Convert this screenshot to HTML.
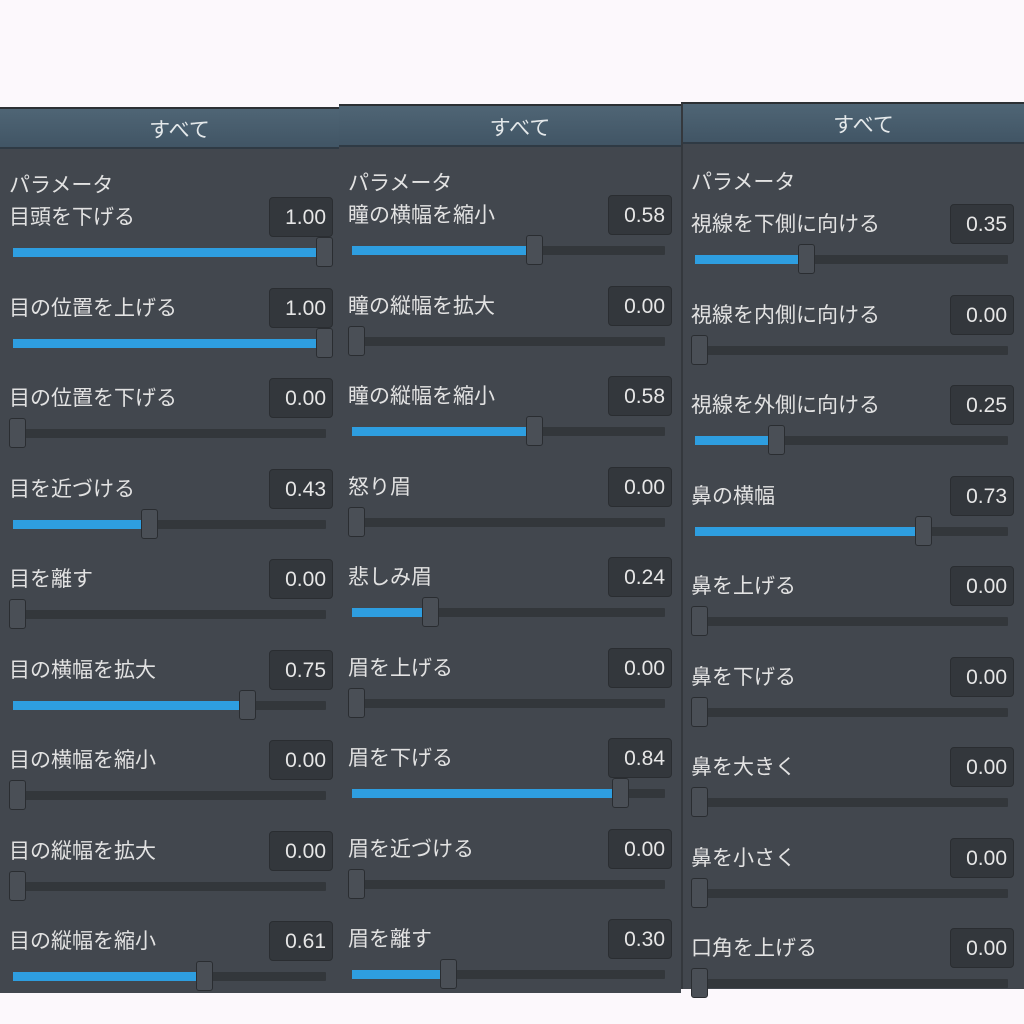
<!DOCTYPE html>
<html><head><meta charset="utf-8"><style>
body{margin:0;width:1024px;height:1024px;background:#fcf8fc;position:relative;overflow:hidden;font-family:"Liberation Sans","Noto Sans CJK JP",sans-serif;}
.p{position:absolute;background:#42474e;border-top:2px solid #2c3034;box-sizing:border-box;}
.h{position:absolute;left:0;right:0;top:0;height:38px;background:linear-gradient(#4f6575,#415565);border-bottom:2px solid #2f3a44;color:#e4e8ea;font-size:21px;text-align:center;line-height:44px;padding-left:20px;}
.t{position:absolute;left:9px;color:#e2e2e2;font-size:21px;}
.r{position:absolute;left:0;right:0;height:60px;}
.l{position:absolute;left:9px;top:1px;line-height:40px;font-size:21px;color:#e2e2e2;white-space:nowrap;}
.v{position:absolute;top:0;width:64px;height:40px;box-sizing:border-box;background:#33373c;border:1px solid #2a2d31;border-radius:4px;color:#e6e6e6;font-size:21px;text-align:right;padding-right:6px;line-height:40px;}
.k{position:absolute;left:13px;top:51px;width:313px;height:9px;background:#33373b;border-radius:1px;}
.f{position:absolute;left:0;top:0;height:9px;background:#2e9ee0;width:calc(var(--v)*307px + 4px);}
.m{position:absolute;top:-11px;left:calc(var(--v)*307px - 4px);width:17px;height:30px;box-sizing:border-box;background:#4a4f56;border:1px solid #2a2d31;border-radius:3px;}
</style></head><body>

<div class="p" style="left:0;top:107px;width:339px;height:886px;">
<div class="h">すべて</div>
<div class="t" style="top:60px;">パラメータ</div>
<div class="r" style="top:88px"><div class="l">目頭を下げる</div><div class="v" style="left:269px">1.00</div><div class="k" style="--v:1"><div class="f"></div><div class="m"></div></div></div>
<div class="r" style="top:178.5px"><div class="l">目の位置を上げる</div><div class="v" style="left:269px">1.00</div><div class="k" style="--v:1"><div class="f"></div><div class="m"></div></div></div>
<div class="r" style="top:269px"><div class="l">目の位置を下げる</div><div class="v" style="left:269px">0.00</div><div class="k" style="--v:0"><div class="m"></div></div></div>
<div class="r" style="top:359.5px"><div class="l">目を近づける</div><div class="v" style="left:269px">0.43</div><div class="k" style="--v:0.43"><div class="f"></div><div class="m"></div></div></div>
<div class="r" style="top:450px"><div class="l">目を離す</div><div class="v" style="left:269px">0.00</div><div class="k" style="--v:0"><div class="m"></div></div></div>
<div class="r" style="top:540.5px"><div class="l">目の横幅を拡大</div><div class="v" style="left:269px">0.75</div><div class="k" style="--v:0.75"><div class="f"></div><div class="m"></div></div></div>
<div class="r" style="top:631px"><div class="l">目の横幅を縮小</div><div class="v" style="left:269px">0.00</div><div class="k" style="--v:0"><div class="m"></div></div></div>
<div class="r" style="top:721.5px"><div class="l">目の縦幅を拡大</div><div class="v" style="left:269px">0.00</div><div class="k" style="--v:0"><div class="m"></div></div></div>
<div class="r" style="top:812px"><div class="l">目の縦幅を縮小</div><div class="v" style="left:269px">0.61</div><div class="k" style="--v:0.61"><div class="f"></div><div class="m"></div></div></div>
</div>

<div class="p" style="left:339px;top:104px;width:342px;height:889px;">
<div class="h" style="height:39px;line-height:45px">すべて</div>
<div class="t" style="top:61px;">パラメータ</div>
<div class="r" style="top:89px"><div class="l">瞳の横幅を縮小</div><div class="v" style="left:269px">0.58</div><div class="k" style="--v:0.58"><div class="f"></div><div class="m"></div></div></div>
<div class="r" style="top:179.5px"><div class="l">瞳の縦幅を拡大</div><div class="v" style="left:269px">0.00</div><div class="k" style="--v:0"><div class="m"></div></div></div>
<div class="r" style="top:270px"><div class="l">瞳の縦幅を縮小</div><div class="v" style="left:269px">0.58</div><div class="k" style="--v:0.58"><div class="f"></div><div class="m"></div></div></div>
<div class="r" style="top:360.5px"><div class="l">怒り眉</div><div class="v" style="left:269px">0.00</div><div class="k" style="--v:0"><div class="m"></div></div></div>
<div class="r" style="top:451px"><div class="l">悲しみ眉</div><div class="v" style="left:269px">0.24</div><div class="k" style="--v:0.24"><div class="f"></div><div class="m"></div></div></div>
<div class="r" style="top:541.5px"><div class="l">眉を上げる</div><div class="v" style="left:269px">0.00</div><div class="k" style="--v:0"><div class="m"></div></div></div>
<div class="r" style="top:632px"><div class="l">眉を下げる</div><div class="v" style="left:269px">0.84</div><div class="k" style="--v:0.86"><div class="f"></div><div class="m"></div></div></div>
<div class="r" style="top:722.5px"><div class="l">眉を近づける</div><div class="v" style="left:269px">0.00</div><div class="k" style="--v:0"><div class="m"></div></div></div>
<div class="r" style="top:813px"><div class="l">眉を離す</div><div class="v" style="left:269px">0.30</div><div class="k" style="--v:0.30"><div class="f"></div><div class="m"></div></div></div>
</div>

<div class="p" style="left:681px;top:102px;width:343px;height:887px;border-left:2px solid #34383d;">
<div class="h" style="height:38px;line-height:44px">すべて</div>
<div class="t" style="top:62px;left:8px">パラメータ</div>
<div class="r" style="top:100px"><div class="l" style="left:8px">視線を下側に向ける</div><div class="v" style="left:267px">0.35</div><div class="k" style="--v:0.35;left:12px"><div class="f"></div><div class="m"></div></div></div>
<div class="r" style="top:190.5px"><div class="l" style="left:8px">視線を内側に向ける</div><div class="v" style="left:267px">0.00</div><div class="k" style="--v:0;left:12px"><div class="m"></div></div></div>
<div class="r" style="top:281px"><div class="l" style="left:8px">視線を外側に向ける</div><div class="v" style="left:267px">0.25</div><div class="k" style="--v:0.25;left:12px"><div class="f"></div><div class="m"></div></div></div>
<div class="r" style="top:371.5px"><div class="l" style="left:8px">鼻の横幅</div><div class="v" style="left:267px">0.73</div><div class="k" style="--v:0.73;left:12px"><div class="f"></div><div class="m"></div></div></div>
<div class="r" style="top:462px"><div class="l" style="left:8px">鼻を上げる</div><div class="v" style="left:267px">0.00</div><div class="k" style="--v:0;left:12px"><div class="m"></div></div></div>
<div class="r" style="top:552.5px"><div class="l" style="left:8px">鼻を下げる</div><div class="v" style="left:267px">0.00</div><div class="k" style="--v:0;left:12px"><div class="m"></div></div></div>
<div class="r" style="top:643px"><div class="l" style="left:8px">鼻を大きく</div><div class="v" style="left:267px">0.00</div><div class="k" style="--v:0;left:12px"><div class="m"></div></div></div>
<div class="r" style="top:733.5px"><div class="l" style="left:8px">鼻を小さく</div><div class="v" style="left:267px">0.00</div><div class="k" style="--v:0;left:12px"><div class="m"></div></div></div>
<div class="r" style="top:824px"><div class="l" style="left:8px">口角を上げる</div><div class="v" style="left:267px">0.00</div><div class="k" style="--v:0;left:12px"><div class="m"></div></div></div>
</div>
</body></html>
